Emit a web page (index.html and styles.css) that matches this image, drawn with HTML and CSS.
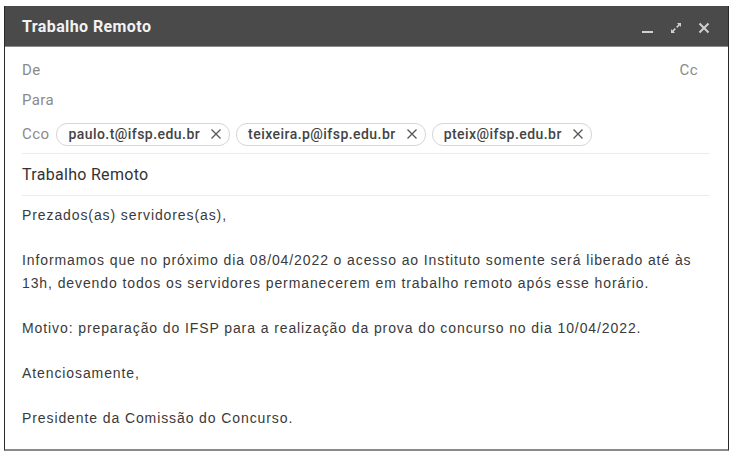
FILE: index.html
```html
<!DOCTYPE html>
<html lang="pt-BR">

<head>
  <meta charset="UTF-8">
  <meta name="viewport" content="width=device-width, initial-scale=1.0">
  <link rel="stylesheet" href="styles.css">
  <title>Trabalho Remoto</title>
</head>

<body>
  <div class="compose">
    <div class="header">
      <span class="title">Trabalho Remoto</span>
      <div class="actions">
        <svg class="icon" viewBox="0 0 14 14" width="14" height="14">
          <rect x="1" y="10" width="11" height="2" fill="#d0d0d0" />
        </svg>
        <svg class="icon" viewBox="0 0 14 14" width="14" height="14">
          <path d="M8 2h4v4l-1.4-1.4-2.3 2.3-1.2-1.2 2.3-2.3z M6 12H2V8l1.4 1.4 2.3-2.3 1.2 1.2-2.3 2.3z" fill="#d0d0d0" />
        </svg>
        <svg class="icon" viewBox="0 0 14 14" width="14" height="14">
          <path d="M2.5 2.5l9 9M11.5 2.5l-9 9" stroke="#d0d0d0" stroke-width="2" />
        </svg>
      </div>
    </div>

    <div class="fields">
      <div class="row">
        <span class="label">De</span>
        <span class="label cc">Cc</span>
      </div>
      <div class="row">
        <span class="label">Para</span>
      </div>
      <div class="row row-cco">
        <span class="label">Cco</span>
        <span class="chip">paulo.t@ifsp.edu.br <svg class="chip-x" viewBox="0 0 12 12" width="12" height="12"><path d="M1.5 1.5l9 9M10.5 1.5l-9 9" stroke="#555" stroke-width="1.3" /></svg></span>
        <span class="chip">teixeira.p@ifsp.edu.br <svg class="chip-x" viewBox="0 0 12 12" width="12" height="12"><path d="M1.5 1.5l9 9M10.5 1.5l-9 9" stroke="#555" stroke-width="1.3" /></svg></span>
        <span class="chip">pteix@ifsp.edu.br <svg class="chip-x" viewBox="0 0 12 12" width="12" height="12"><path d="M1.5 1.5l9 9M10.5 1.5l-9 9" stroke="#555" stroke-width="1.3" /></svg></span>
      </div>
      <div class="subject">Trabalho Remoto</div>
    </div>

    <div class="body">
      <p>Prezados(as) servidores(as),</p>
      <p>Informamos que no próximo dia 08/04/2022 o acesso ao Instituto somente será liberado até às<br>
        13h, devendo todos os servidores permanecerem em trabalho remoto após esse horário.</p>
      <p>Motivo: preparação do IFSP para a realização da prova do concurso no dia 10/04/2022.</p>
      <p>Atenciosamente,</p>
      <p>Presidente da Comissão do Concurso.</p>
    </div>
  </div>
</body>

</html>
```

FILE: styles.css
```css
body {
  margin: 0;
  padding: 6px 3px 0 4px;
  background: #fff;
}

.compose {
  width: 725px;
  height: 445px;
  border: 1px solid #2a2a2a;
  border-top: none;
  border-bottom: 2px solid #8a8a8a;
  box-sizing: border-box;
  font-family: Roboto, "Liberation Sans", sans-serif;
}

.header {
  height: 41px;
  background-color: #4a4a4a;
  border-bottom: 1px solid #8c8c8c;
  display: flex;
  align-items: center;
  justify-content: space-between;
  padding: 0 17px;
  box-sizing: border-box;
}

.title {
  color: #f2f2f2;
  font-weight: bold;
  font-size: 16px;
  letter-spacing: 0.4px;
}

.actions {
  display: flex;
  gap: 14px;
  margin-top: 3px;
}

.icon {
  display: block;
}

.fields {
  padding: 0 18px 0 17px;
}

.row {
  display: flex;
  justify-content: space-between;
  align-items: center;
  height: 30px;
}

.row:first-child {
  margin-top: 8px;
}

.label {
  color: #8a8a8a;
  font-size: 15px;
  letter-spacing: 0.4px;
}

.cc {
  margin-right: 12px;
}

.row-cco {
  justify-content: flex-start;
  gap: 6px;
  height: 38px;
  border-bottom: 1px solid #ececec;
}

.row-cco .label {
  margin-right: 1px;
}

.chip {
  display: inline-flex;
  align-items: center;
  gap: 10px;
  height: 21px;
  padding: 0 7px 0 11px;
  border: 1px solid #d6d6d6;
  border-radius: 11px;
  color: #444;
  font-size: 14px;
  font-weight: 500;
  letter-spacing: 0.45px;
}

.chip-x {
  display: block;
}

.subject {
  height: 41px;
  line-height: 41px;
  font-size: 16px;
  letter-spacing: 0.3px;
  color: #333;
  border-bottom: 1px solid #ececec;
}

.body {
  padding: 8px 17px 0 17px;
  font-family: "Liberation Sans", Arial, sans-serif;
  font-size: 14px;
  letter-spacing: 0.9px;
  color: #3a3a3a;
  line-height: 23px;
}

.body p {
  margin: 0 0 22px 0;
}
```
